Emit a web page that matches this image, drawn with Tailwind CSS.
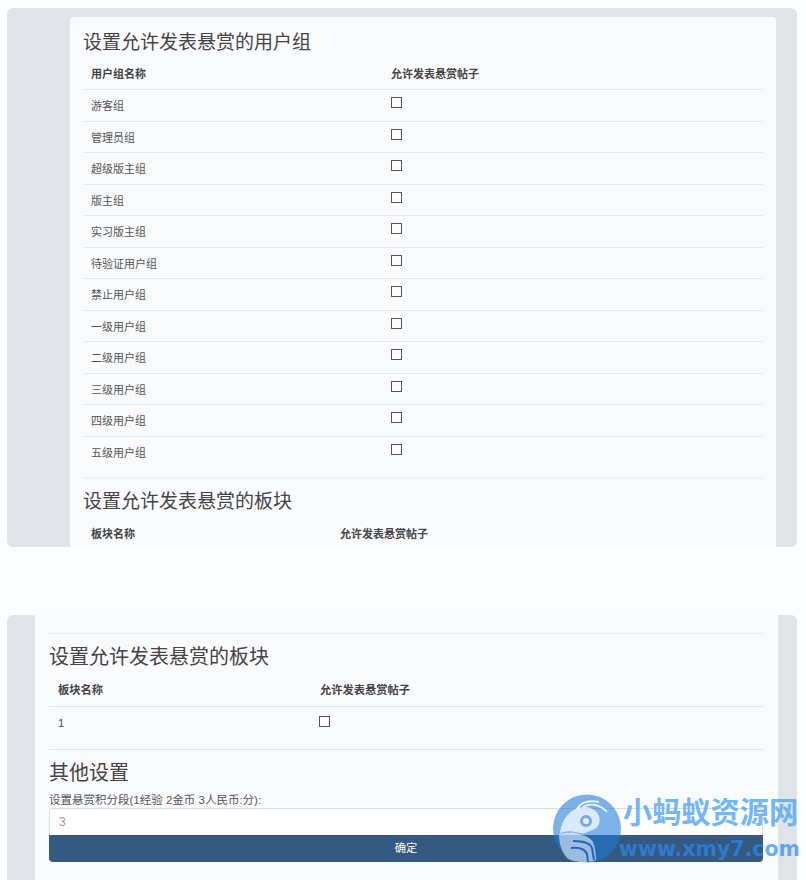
<!DOCTYPE html>
<html lang="en">
<head>
  <meta charset="UTF-8">
  <title>悬赏设置</title>
  <script src="https://cdn.jsdelivr.net/npm/@tailwindcss/browser@4"></script>
</head>
<body class="relative h-[880px] overflow-hidden bg-[#fcfdfe] font-['Liberation_Sans','Noto_Sans_CJK_SC',sans-serif] text-[#555]">

  <!-- first screenshot -->
  <div class="ml-[7px] mr-[9px] mt-2 h-[539px] overflow-hidden rounded-md bg-[#e0e3e8] pl-[63px] pr-[21px] pt-[9px]">
    <div class="h-full rounded-t-sm bg-[#f9fafc] px-[13px]">
      <h2 class="h-[42px] pt-[12px] text-[19px] leading-[28px] text-[#444]">设置允许发表悬赏的用户组</h2>
      <div class="flex h-[31px] items-center border-b border-[#e6e8ec] px-2 pt-[1px] text-[11px] font-bold text-[#444]">
        <div class="w-[300px]">用户组名称</div>
        <div>允许发表悬赏帖子</div>
      </div>
      <div class="flex h-[31.5px] border-b border-[#e6e8ec] px-2 text-[11px]"><div class="w-[300px] pt-[8px]">游客组</div><div class="pt-[7px]"><div class="size-[11px] border border-[#555] bg-[#fbfbfb]"></div></div></div>
      <div class="flex h-[31.5px] border-b border-[#e6e8ec] px-2 text-[11px]"><div class="w-[300px] pt-[8px]">管理员组</div><div class="pt-[7px]"><div class="size-[11px] border border-[#555] bg-[#fbfbfb]"></div></div></div>
      <div class="flex h-[31.5px] border-b border-[#e6e8ec] px-2 text-[11px]"><div class="w-[300px] pt-[8px]">超级版主组</div><div class="pt-[7px]"><div class="size-[11px] border border-[#555] bg-[#fbfbfb]"></div></div></div>
      <div class="flex h-[31.5px] border-b border-[#e6e8ec] px-2 text-[11px]"><div class="w-[300px] pt-[8px]">版主组</div><div class="pt-[7px]"><div class="size-[11px] border border-[#555] bg-[#fbfbfb]"></div></div></div>
      <div class="flex h-[31.5px] border-b border-[#e6e8ec] px-2 text-[11px]"><div class="w-[300px] pt-[8px]">实习版主组</div><div class="pt-[7px]"><div class="size-[11px] border border-[#555] bg-[#fbfbfb]"></div></div></div>
      <div class="flex h-[31.5px] border-b border-[#e6e8ec] px-2 text-[11px]"><div class="w-[300px] pt-[8px]">待验证用户组</div><div class="pt-[7px]"><div class="size-[11px] border border-[#555] bg-[#fbfbfb]"></div></div></div>
      <div class="flex h-[31.5px] border-b border-[#e6e8ec] px-2 text-[11px]"><div class="w-[300px] pt-[8px]">禁止用户组</div><div class="pt-[7px]"><div class="size-[11px] border border-[#555] bg-[#fbfbfb]"></div></div></div>
      <div class="flex h-[31.5px] border-b border-[#e6e8ec] px-2 text-[11px]"><div class="w-[300px] pt-[8px]">一级用户组</div><div class="pt-[7px]"><div class="size-[11px] border border-[#555] bg-[#fbfbfb]"></div></div></div>
      <div class="flex h-[31.5px] border-b border-[#e6e8ec] px-2 text-[11px]"><div class="w-[300px] pt-[8px]">二级用户组</div><div class="pt-[7px]"><div class="size-[11px] border border-[#555] bg-[#fbfbfb]"></div></div></div>
      <div class="flex h-[31.5px] border-b border-[#e6e8ec] px-2 text-[11px]"><div class="w-[300px] pt-[8px]">三级用户组</div><div class="pt-[7px]"><div class="size-[11px] border border-[#555] bg-[#fbfbfb]"></div></div></div>
      <div class="flex h-[31.5px] border-b border-[#e6e8ec] px-2 text-[11px]"><div class="w-[300px] pt-[8px]">四级用户组</div><div class="pt-[7px]"><div class="size-[11px] border border-[#555] bg-[#fbfbfb]"></div></div></div>
      <div class="flex h-[42.5px] border-b-2 border-[#eff1f4] px-2 text-[11px]"><div class="w-[300px] pt-[8px]">五级用户组</div><div class="pt-[7px]"><div class="size-[11px] border border-[#555] bg-[#fbfbfb]"></div></div></div>
      <h2 class="pt-[9px] text-[19px] leading-[28px] text-[#444]">设置允许发表悬赏的板块</h2>
      <div class="flex px-2 pt-[10px] text-[11px] font-bold text-[#444]">
        <div class="w-[249px]">板块名称</div>
        <div>允许发表悬赏帖子</div>
      </div>
    </div>
  </div>

  <!-- second screenshot -->
  <div class="ml-[7px] mr-[9px] mt-[68px] h-[265px] overflow-hidden rounded-t-md bg-[#e0e3e8] pl-[28px] pr-[19px]">
    <div class="h-full bg-[#f9fafc] pl-[14px] pr-[15px] pt-[18px]">
      <div class="border-t border-[#e8eaee]"></div>
      <h2 class="pt-[8px] text-[20px] leading-[30px] text-[#444]">设置允许发表悬赏的板块</h2>
      <div class="flex h-[35px] items-center border-b border-[#e2e5e9] px-[9px] pt-[3px] text-[11.25px] font-bold text-[#444]">
        <div class="w-[262px]">板块名称</div>
        <div>允许发表悬赏帖子</div>
      </div>
      <div class="flex h-[43px] border-b border-[#e2e5e9] px-[9px] text-[11.25px]">
        <div class="w-[261px] pt-[8px] text-[#456]">1</div>
        <div class="pt-[9px]"><div class="size-[11px] border border-[#555] bg-[#fbfbfb]"></div></div>
      </div>
      <h2 class="pt-[8px] text-[20px] leading-[30px] text-[#444]">其他设置</h2>
      <label class="block pt-[4px] text-[11.5px] leading-[16px] text-[#555]">设置悬赏积分段(1经验 2金币 3人民币:分):</label>
      <input value="3" class="block h-[27px] w-full rounded-t-sm border border-b-0 border-[#d8dbe0] bg-white px-[9px] text-[12px] text-[#999]">
      <button class="block h-[27px] w-full rounded-b-sm bg-[#355a82] text-[11.25px] text-white">确定</button>
    </div>
  </div>

  <!-- watermark -->
  <div class="absolute left-[553px] top-[794px] h-[86px] w-[253px]">
    <svg class="absolute left-0 top-0" width="69" height="69" viewBox="0 0 69 69">
      <circle cx="34" cy="34.500" r="34" fill="#1c7ad8" fill-opacity="0.58"/>
      <path d="M7 39 C9 24 19 13 31 13 C42 13 49 21 46 30 C44 36 36 37 32 39 C26 41 20 34 7 39 Z" fill="#fff" fill-opacity="0.72"/>
      <path d="M6 40 C12 39 19 37 26 40 C32 42 37 43 40 48 C42 53 43 60 43 66 C36 69 24 69 15 65 C9 59 6 50 6 40 Z" fill="#fff" fill-opacity="0.55"/>
      <path d="M20 47 C30 47 37 49 39 54 L41 66 M18 54 C26 53 32 55 34 60 L35 68" fill="none" stroke="#1c68bf" stroke-width="2"/>
      <path d="M24 15 C28 8 36 6 46 8 M30 13 C37 9 47 10 54 18" fill="none" stroke="#fff" stroke-opacity="0.85" stroke-width="1.800"/>
      <circle cx="33" cy="27" r="6" fill="#1c7ad8" fill-opacity="0.55"/>
      <circle cx="33" cy="27" r="3" fill="#fff" fill-opacity="0.85"/>
    </svg>
    <div class="absolute left-[70px] top-[1px] whitespace-nowrap text-[29.2px] font-bold leading-[36px] text-[#5aaaf5]/85">小蚂蚁资源网</div>
    <div class="absolute left-[66px] top-[40px] whitespace-nowrap font-['DejaVu_Sans',sans-serif] text-[20.500px] font-bold leading-[30px] text-[#2a8af0]/70">www.xmy7.com</div>
  </div>
</body>
</html>
